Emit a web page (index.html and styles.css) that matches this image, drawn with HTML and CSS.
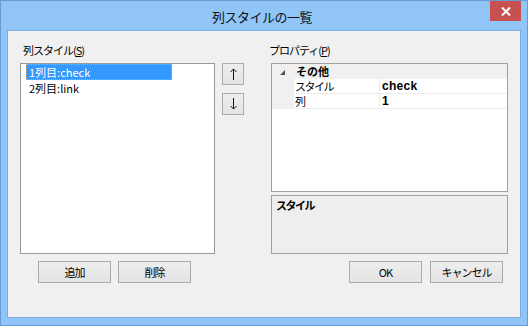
FILE: index.html
```html
<!DOCTYPE html>
<html lang="ja">
<head>
<meta charset="utf-8">
<title>列スタイルの一覧</title>
<link rel="stylesheet" href="styles.css">
</head>
<body>
<div class="window">
  <div class="titlebar">
    <div class="title">列スタイルの一覧</div>
    <div class="close">
      <svg width="10" height="9" viewBox="0 0 10 9"><path d="M1 0.5 L9 8.5 M9 0.5 L1 8.5" stroke="#fff" stroke-width="2" fill="none"/></svg>
    </div>
  </div>
  <div class="client">
    <div class="main">
      <div class="left">
        <div class="label">列スタイル(<u>S</u>)</div>
        <div class="listbox">
          <div class="item selected">1列目:check</div>
          <div class="item">2列目:link</div>
        </div>
      </div>
      <div class="arrows">
        <div class="btn arrow" aria-label="↑">
          <svg width="7" height="12" viewBox="0 0 7 12"><path d="M3.5 1 V12 M0.5 4 L3.5 1 L6.5 4" stroke="#111" stroke-width="1" fill="none"/></svg>
        </div>
        <div class="btn arrow" aria-label="↓">
          <svg width="7" height="12" viewBox="0 0 7 12"><path d="M3.5 0 V11 M0.5 8 L3.5 11 L6.5 8" stroke="#111" stroke-width="1" fill="none"/></svg>
        </div>
      </div>
      <div class="right">
        <div class="label label-p">プロパティ(<u>P</u>)</div>
        <div class="grid">
          <div class="cat">
            <div class="margin"><svg width="5" height="5" viewBox="0 0 5 5"><path d="M5 0 L5 5 L0 5 Z" fill="#555"/></svg></div>
            <div class="cat-text">その他</div>
          </div>
          <div class="row">
            <div class="margin"></div>
            <div class="name">スタイル</div>
            <div class="value">check</div>
          </div>
          <div class="row">
            <div class="margin"></div>
            <div class="name">列</div>
            <div class="value">1</div>
          </div>
        </div>
        <div class="desc">スタイル</div>
      </div>
    </div>
    <div class="buttons">
      <div class="group">
        <div class="btn push">追加</div>
        <div class="btn push">削除</div>
      </div>
      <div class="group group-right">
        <div class="btn push">OK</div>
        <div class="btn push">キャンセル</div>
      </div>
    </div>
  </div>
</div>
</body>
</html>
```
FILE: styles.css
```css
html, body {
  margin: 0;
  padding: 0;
}
body {
  width: 528px;
  height: 326px;
  overflow: hidden;
  font-family: "Noto Sans CJK JP", "Noto Sans", sans-serif;
  font-size: 11px;
  color: #000;
}
.window {
  box-sizing: border-box;
  width: 528px;
  height: 326px;
  background: #91c5f7;
  border: 1px solid #6a9ad4;
  padding: 0 6px 7px 6px;
  display: flex;
  flex-direction: column;
}
.titlebar {
  position: relative;
  box-sizing: border-box;
  height: 29px;
  padding-top: 3px;
  flex: none;
}
.title {
  text-align: center;
  font-size: 13px;
  line-height: 26px;
  letter-spacing: -0.5px;
  color: #111;
  padding-right: 4px;
}
.close {
  position: absolute;
  top: 0;
  right: 0;
  width: 31px;
  height: 20px;
  background: #c75050;
  display: flex;
  align-items: center;
  justify-content: center;
}
.close svg {
  display: block;
  margin-left: 1px;
}
.client {
  flex: 1;
  border: 1px solid #7caee4;
  background: #f0f0f0;
  padding: 12px 12px 0 12px;
  display: flex;
  flex-direction: column;
}
.main {
  display: flex;
}
.label {
  height: 14px;
  line-height: 14px;
  margin-bottom: 6px;
  letter-spacing: -1px;
  padding-left: 3px;
  white-space: nowrap;
}
.label u {
  text-decoration: underline;
  text-underline-offset: 1px;
}
.label-p {
  padding-left: 0;
  margin-left: -2px;
}
.left {
  width: 195px;
}
.listbox {
  box-sizing: border-box;
  height: 191px;
  background: #fff;
  border: 1px solid #9a9a9a;
}
.item {
  height: 16px;
  line-height: 16px;
  margin-left: 5px;
  width: 146px;
  box-sizing: border-box;
  padding-left: 3px;
  white-space: nowrap;
}
.item.selected {
  background: #3399ff;
  color: #fff;
  outline: 1px dotted #e8a05a;
  outline-offset: -1px;
}
.arrows {
  margin-left: 7px;
  padding-top: 20px;
  display: flex;
  flex-direction: column;
  gap: 8px;
}
.btn {
  box-sizing: border-box;
  border: 1px solid #acacac;
  background: linear-gradient(#eeeeee, #e4e4e4);
  display: flex;
  align-items: center;
  justify-content: center;
  white-space: nowrap;
}
.arrow {
  width: 22px;
  height: 22px;
}
.arrow svg {
  display: block;
}
.right {
  margin-left: 27px;
  width: 237px;
}
.grid {
  box-sizing: border-box;
  height: 129px;
  background: #fff;
  border: 1px solid #a0a0a0;
}
.cat, .row {
  display: grid;
  grid-template-columns: 22px 86px 1fr;
  line-height: 14px;
}
.cat {
  height: 15px;
  background: #f0f0f0;
  font-weight: bold;
}
.cat .margin {
  display: flex;
  align-items: center;
  padding-left: 8px;
  padding-top: 1px;
}
.cat-text {
  grid-column: 2 / 4;
  padding-left: 2px;
  line-height: 15px;
}
.row {
  height: 15px;
  box-sizing: border-box;
}
.row .margin {
  background: #f0f0f0;
}
.name {
  padding-left: 1px;
  border-bottom: 1px solid #ececec;
  border-right: 1px solid #ececec;
  letter-spacing: -1.5px;
}
.value {
  padding-left: 2px;
  border-bottom: 1px solid #ececec;
  font-family: "Liberation Sans", "Noto Sans CJK JP", sans-serif;
  font-weight: bold;
  font-size: 12px;
  letter-spacing: 0.3px;
}
.desc {
  box-sizing: border-box;
  margin-top: 3px;
  height: 59px;
  border: 1px solid #a0a0a0;
  background: #eeeeee;
  font-weight: bold;
  padding: 2px 0 0 4px;
  line-height: 14px;
  letter-spacing: -1.5px;
}
.buttons {
  display: flex;
  justify-content: space-between;
  margin-top: 7px;
  margin-left: 18px;
  margin-right: 5px;
}
.group {
  display: flex;
  gap: 7px;
}
.group-right {
  gap: 8px;
}
.push {
  width: 73px;
  height: 22px;
  line-height: 20px;
  letter-spacing: -1px;
}
```
